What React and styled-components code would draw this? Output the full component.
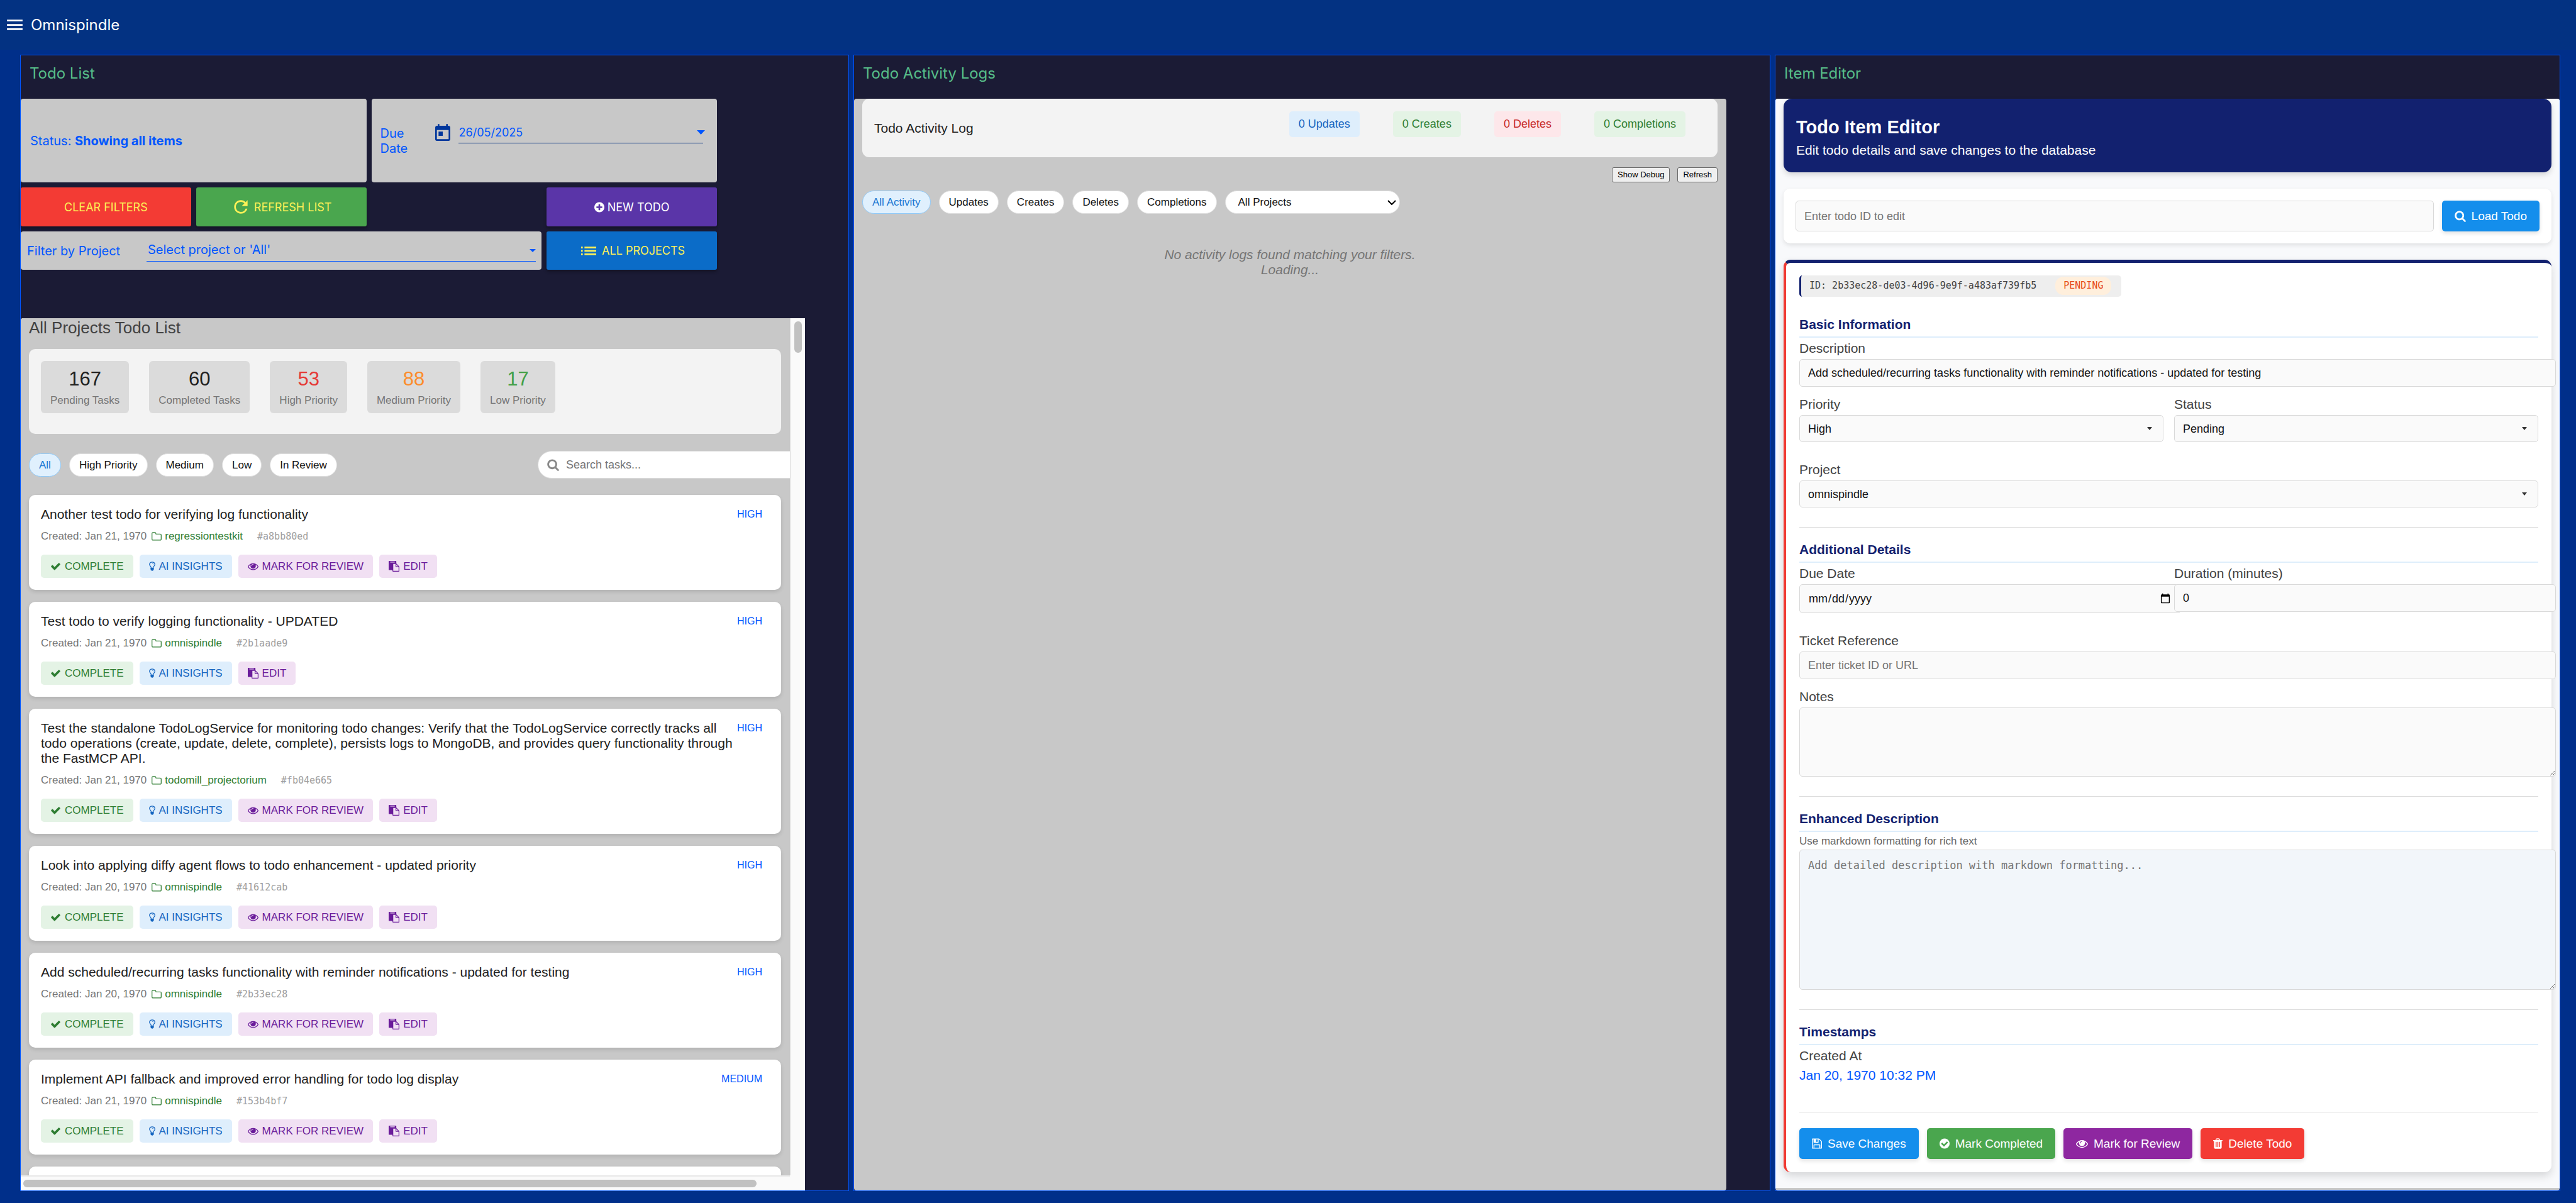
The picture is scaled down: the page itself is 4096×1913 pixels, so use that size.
import React from "react";
import styled, { createGlobalStyle, css } from "styled-components";
import { MdMenu, MdToday, MdRefresh, MdList } from "react-icons/md";

const sans = `"Liberation Sans", Arial, sans-serif`;
const system = `Inter, "Liberation Sans", sans-serif`;
const mono = `"DejaVu Sans Mono", "Liberation Mono", monospace`;

const blue = "#0055ff";
const navy = "#12216f";

const GlobalStyle = createGlobalStyle`
  *, *::before, *::after { box-sizing: border-box; }
  body { margin: 0; background: #002f8a; font-family: ${sans}; color: #212121; }
  button, input, select, textarea { font-family: inherit; margin: 0; }
  h1, h2, h3, p { margin: 0; font-weight: 400; }
  svg { display: block; flex: none; }
`;

/* ---------- icons ---------- */

const glyphs = {
  check: [0, 1792, "M1671 566q0 40-28 68l-724 724-136 136q-28 28-68 28t-68-28l-136-136-362-362q-28-28-28-68t28-68l136-136q28-28 68-28t68 28l294 295 656-657q28-28 68-28t68 28l136 136q28 28 28 68z"],
  search: [64, 1664, "M1216 832q0-185-131.5-316.5t-316.5-131.5-316.5 131.5-131.5 316.5 131.5 316.5 316.5 131.5 316.5-131.5 131.5-316.5zm512 832q0 52-38 90t-90 38q-54 0-90-38l-343-342q-179 124-399 124-143 0-273.5-55.5t-225-150-150-225-55.5-273.5 55.5-273.5 150-225 225-150 273.5-55.5 273.5 55.5 225 150 150 225 55.5 273.5q0 220-124 399l343 343q37 37 37 90z"],
  eye: [0, 1792, "M1664 960q-152-236-381-353 61 104 61 225 0 185-131.5 316.5t-316.5 131.5-316.5-131.5-131.5-316.5q0-121 61-225-229 117-381 353 133 205 333.5 326.5t434.5 121.5 434.5-121.5 333.5-326.5zm-720-384q0-20-14-34t-34-14q-125 0-214.5 89.5t-89.5 214.5q0 20 14 34t34 14 34-14 14-34q0-86 61-147t147-61q20 0 34-14t14-34zm848 384q0 34-20 69-140 230-376.5 368.5t-499.5 138.5-499.5-139-376.5-368q-20-35-20-69t20-69q140-229 376.5-368t499.5-139 499.5 139 376.5 368q20 35 20 69z"],
  folder: [64, 1664, "M1600 1312v-704q0-40-28-68t-68-28h-704q-40 0-68-28t-28-68v-64q0-40-28-68t-68-28h-320q-40 0-68 28t-28 68v960q0 40 28 68t68 28h1216q40 0 68-28t28-68zm128-704v704q0 92-66 158t-158 66h-1216q-92 0-158-66t-66-158v-960q0-92 66-158t158-66h320q92 0 158 66t66 158v32h672q92 0 158 66t66 158z"],
  checkCircle: [128, 1536, "M1412 734q0-28-18-46l-91-90q-19-19-45-19t-45 19l-408 407-226-226q-19-19-45-19t-45 19l-91 90q-18 18-18 46 0 27 18 45l362 362q19 19 45 19 27 0 46-19l543-543q18-18 18-45zm252 162q0 209-103 385.5t-279.5 279.5-385.5 103-385.5-103-279.5-279.5-103-385.5 103-385.5 279.5-279.5 385.5-103 385.5 103 279.5 279.5 103 385.5z"],
  plusCircle: [128, 1536, "M1344 960v-128q0-26-19-45t-45-19h-256v-256q0-26-19-45t-45-19h-128q-26 0-45 19t-19 45v256h-256q-26 0-45 19t-19 45v128q0 26 19 45t45 19h256v256q0 26 19 45t45 19h128q26 0 45-19t19-45v-256h256q26 0 45-19t19-45zm320-64q0 209-103 385.5t-279.5 279.5-385.5 103-385.5-103-279.5-279.5-103-385.5 103-385.5 279.5-279.5 385.5-103 385.5 103 279.5 279.5 103 385.5z"],
  trash: [192, 1408, "M704 1376v-704q0-14-9-23t-23-9h-64q-14 0-23 9t-9 23v704q0 14 9 23t23 9h64q14 0 23-9t9-23zm256 0v-704q0-14-9-23t-23-9h-64q-14 0-23 9t-9 23v704q0 14 9 23t23 9h64q14 0 23-9t9-23zm256 0v-704q0-14-9-23t-23-9h-64q-14 0-23 9t-9 23v704q0 14 9 23t23 9h64q14 0 23-9t9-23zm-544-992h448l-48-117q-7-9-17-11h-317q-10 2-17 11zm928 32v64q0 14-9 23t-23 9h-96v948q0 83-47 143.5t-113 60.5h-832q-66 0-113-58.5t-47-141.5v-952h-96q-14 0-23-9t-9-23v-64q0-14 9-23t23-9h309l70-167q15-37 54-63t79-26h320q40 0 79 26t54 63l70 167h309q14 0 23 9t9 23z"],
  save: [128, 1536, "M512 1536h768v-384h-768v384zm896 0h128v-896q0-14-10-38.5t-20-34.5l-281-281q-10-10-34-20t-39-10v416q0 40-28 68t-68 28h-576q-40 0-68-28t-28-68v-416h-128v1280h128v-416q0-40 28-68t68-28h832q40 0 68 28t28 68v416zm-384-928v-320q0-13-9.5-22.5t-22.5-9.5h-192q-13 0-22.5 9.5t-9.5 22.5v320q0 13 9.5 22.5t22.5 9.5h192q13 0 22.5-9.5t9.5-22.5zm640 32v928q0 40-28 68t-68 28h-1344q-40 0-68-28t-28-68v-1344q0-40 28-68t68-28h928q40 0 88 20t76 48l280 280q28 28 48 76t20 88z"],
  paste: [0, 1792, "M768 1664h896v-640h-416q-40 0-68-28t-28-68v-416h-384v1152zm256-1440v-64q0-13-9.5-22.5t-22.5-9.5h-704q-13 0-22.5 9.5t-9.5 22.5v64q0 13 9.5 22.5t22.5 9.5h704q13 0 22.5-9.5t9.5-22.5zm256 672h299l-299-299v299zm512 128v672q0 40-28 68t-68 28h-960q-40 0-68-28t-28-68v-160h-544q-40 0-68-28t-28-68v-1344q0-40 28-68t68-28h1088q40 0 68 28t28 68v328q21 13 36 28l408 408q28 28 48 76t20 88z"],
  bulb: [384, 1024, "M1120 576q0 13-9.5 22.5t-22.5 9.5-22.5-9.5-9.5-22.5q0-46-54-71t-106-25q-13 0-22.5-9.5t-9.5-22.5 9.5-22.5 22.5-9.5q50 0 99.5 16t87 54 37.5 90zm160 0q0-72-34.5-134t-90-101.5-123-62-136.5-22.5-136.5 22.5-123 62-90 101.5-34.5 134q0 101 68 180 10 11 30.5 33t30.5 33q128 153 141 298h228q13-145 141-298 10-11 30.5-33t30.5-33q68-79 68-180zm128 0q0 155-103 268-45 49-74.5 87t-59.5 95.5-34 107.5q47 28 47 82 0 37-25 64 25 27 25 64 0 52-45 81 13 23 13 47 0 46-31.5 71t-77.5 25q-20 44-60 70t-87 26-87-26-60-70q-46 0-77.5-25t-31.5-71q0-24 13-47-45-29-45-81 0-37 25-64-25-27-25-64 0-54 47-82-4-50-34-107.5t-59.5-95.5-74.5-87q-103-113-103-268 0-99 44.5-184.5t117-142 164-89 186.5-32.5 186.5 32.5 164 89 117 142 44.5 184.5z"],
};

function Icon({ name, size = 17 }) {
  const [x, w, d] = glyphs[name];
  return (
    <svg
      width={Math.round((size * w) / 1792)}
      height={size}
      viewBox={`${x} 0 ${w} 1792`}
      fill="currentColor"
      aria-hidden="true"
    >
      <path d={d} />
    </svg>
  );
}

function Caret({ width = 10, height = 5 }) {
  return (
    <svg width={width} height={height} viewBox="0 0 10 5" preserveAspectRatio="none" fill="currentColor" aria-hidden="true">
      <path d="M0 0h10L5 5z" />
    </svg>
  );
}

function Chevron() {
  return (
    <svg width="14" height="8" viewBox="0 0 14 8" fill="none" stroke="currentColor" strokeWidth="2" aria-hidden="true">
      <path d="M1 1l6 6 6-6" />
    </svg>
  );
}

/* ---------- shell ---------- */

const Page = styled.div`
  display: flex;
  flex-direction: column;
  height: 100vh;
`;

const TopBar = styled.header`
  display: flex;
  align-items: center;
  gap: 9px;
  padding: 23px 7px;
  background: #033282;
  color: #fff;
`;

const MenuButton = styled.button`
  padding: 0;
  border: 0;
  background: none;
  color: inherit;
`;

const Brand = styled.h1`
  font: 400 24px/33px ${system};
`;

const Columns = styled.main`
  flex: 1;
  min-height: 0;
  display: grid;
  grid-template-columns: 1318fr 1458fr 1249fr;
  gap: 7px;
  padding: 8px 25px 19px 32px;
`;

const Panel = styled.section`
  display: flex;
  flex-direction: column;
  min-width: 0;
  min-height: 0;
  border: 1px solid ${blue};
  background: #1b1b35;
`;

const PanelTitle = styled.h2`
  padding: 14px 14px 25px;
  font: 400 24px/30px ${system};
  color: #57be89;
`;

/* ---------- list panel: controls ---------- */

const Controls = styled.div`
  display: grid;
  grid-template-columns: repeat(4, 1fr);
  grid-template-rows: 133px 62px 61px;
  gap: 8px;
  margin: 0 209px 77px 0;
  font: 400 20px/24px ${system};
  color: ${blue};
`;

const ControlBox = styled.div`
  grid-column: span ${(p) => p.$span};
  display: flex;
  align-items: center;
  padding: 0 ${(p) => p.$padding};
  border-radius: 4px;
  background: #c8c8c8;
`;

const DateLabel = styled.label`
  width: 60px;
  margin-right: 23px;
`;

const DateControl = styled.div`
  flex: 1;
  display: flex;
  align-items: flex-end;
  gap: 9px;
  padding-bottom: 25px;
  color: #00369c;
`;

const Underlined = styled.div`
  flex: 1;
  display: grid;
  align-items: center;
  border-bottom: 1px solid ${(p) => p.$line};
  color: ${blue};
  > * { grid-area: 1 / 1; }
  > svg { justify-self: end; margin-right: ${(p) => p.$caret || "0"}; pointer-events: none; }
`;

const plainField = css`
  width: 100%;
  border: 0;
  outline: 0;
  appearance: none;
  background: none;
  color: inherit;
  border-radius: 0;
`;

const DateField = styled.input`
  ${plainField}
  padding: 4px 1px;
  font-size: 18px;
  line-height: 24px;
`;

const ProjectFilterLabel = styled.label`
  width: 190px;
`;

const ProjectFilter = styled.select`
  ${plainField}
  padding: 4px 2px 6px;
  font-size: 20px;
  line-height: 24px;
`;

const ActionButton = styled.button`
  grid-column: ${(p) => p.$column};
  display: flex;
  align-items: center;
  justify-content: center;
  gap: 5px;
  border: 0;
  border-radius: 3px;
  background: ${(p) => p.$bg};
  color: ${(p) => p.$color || "#fdf157"};
  box-shadow: 0 3px 5px rgba(0, 0, 0, 0.3);
  font-size: 18px;
  text-transform: uppercase;
`;

/* ---------- list panel: scroll area ---------- */

const ScrollFrame = styled.div`
  flex: 1;
  min-height: 0;
  display: grid;
  grid-template: minmax(0, 1fr) 24px / minmax(0, 1fr) 24px;
  margin-right: 69px;
  border-radius: 4px 0 0 0;
  overflow: hidden;
  background: #fafafa;
`;

const ScrollContent = styled.div`
  overflow: hidden;
  padding: 0 14px 0 13px;
  background: #c8c8c8;
`;

const VerticalTrack = styled.div`
  padding: 5px;
  border-left: 2px solid #e8e8e8;
`;

const HorizontalTrack = styled.div`
  padding: 5px 4px;
  border-top: 2px solid #e8e8e8;
`;

const Thumb = styled.div`
  width: ${(p) => p.$width};
  height: ${(p) => p.$height};
  border-radius: 7px;
  background: #c1c1c1;
`;

const ListTitle = styled.h3`
  margin-bottom: 19px;
  font-size: 26px;
  line-height: 30px;
  color: #424242;
`;

const Stats = styled.div`
  display: flex;
  gap: 32px;
  padding: 19px 19px 33px;
  border-radius: 10px;
  background: #f3f3f3;
`;

const Stat = styled.div`
  padding: 10px 15px 9px;
  border-radius: 6px;
  background: #dbdbdb;
  text-align: center;
`;

const StatNumber = styled.div`
  font-size: 31px;
  line-height: 38px;
  color: ${(p) => p.$color || "#212121"};
`;

const StatLabel = styled.div`
  margin-top: 4px;
  font-size: 17px;
  line-height: 22px;
  color: #757575;
`;

const FilterRow = styled.div`
  display: flex;
  align-items: center;
  gap: 13px;
  margin: ${(p) => p.$margin};
`;

const Pill = styled.button`
  padding: 0 15px;
  border: 1px solid ${(p) => (p.$active ? "#90caf9" : "#dddddd")};
  border-radius: 19px;
  background: ${(p) => (p.$active ? "#e0f0fd" : "#ffffff")};
  color: ${(p) => (p.$active ? "#1976d2" : "#111111")};
  font-size: 17px;
  line-height: 35px;
`;

const SearchBox = styled.label`
  display: flex;
  align-items: center;
  gap: 11px;
  flex: none;
  width: 440px;
  margin: 0 -53px 0 auto;
  padding: 0 14px;
  border: 1px solid #dddddd;
  border-radius: 22px;
  background: #fff;
  color: #888;
`;

const SearchInput = styled.input`
  ${plainField}
  padding: 0;
  font-size: 18px;
  line-height: 42px;
  height: 42px;
  &::placeholder { color: #757575; }
`;

const Todo = styled.article`
  margin-bottom: 19px;
  padding: 19px;
  border-radius: 10px;
  background: #fff;
  box-shadow: 0 3px 6px rgba(0, 0, 0, 0.12);
`;

const TodoHead = styled.div`
  display: flex;
  align-items: flex-start;
  justify-content: space-between;
`;

const TodoTitle = styled.h3`
  font-size: 21px;
  line-height: 24px;
`;

const Priority = styled.span`
  padding: 0 11px 0 5px;
  font-size: 16px;
  line-height: 24px;
  color: ${blue};
`;

const Meta = styled.div`
  display: flex;
  align-items: center;
  margin: 12px 0 18px;
  font-size: 17px;
  line-height: 22px;
  color: #757575;
`;

const Project = styled.span`
  display: flex;
  align-items: center;
  gap: 5px;
  margin: 0 23px 0 8px;
  color: #2e7d32;
`;

const Hash = styled.code`
  font: 15px/22px ${mono};
  color: #9e9e9e;
`;

const Actions = styled.div`
  display: flex;
  gap: 10px;
`;

const tones = {
  green: ["#e4f3e5", "#2e7d32"],
  blue: ["#deeefc", "#1565c0"],
  purple: ["#f1e0f3", "#6a1b9a"],
  red: ["#fde7ea", "#c62828"],
};

const SoftButton = styled.button`
  display: flex;
  align-items: center;
  gap: 6px;
  padding: 0 15px;
  border: 0;
  border-radius: 5px;
  background: ${(p) => tones[p.$tone][0]};
  color: ${(p) => tones[p.$tone][1]};
  font-size: 17px;
  line-height: 37px;
  text-transform: uppercase;
`;

/* ---------- log panel ---------- */

const LogBody = styled.div`
  flex: 1;
  margin-right: 69px;
  padding: 0 14px 0 13px;
  border-radius: 4px;
  background: #c8c8c8;
`;

const LogHeader = styled.div`
  display: flex;
  align-items: center;
  justify-content: space-between;
  padding: 20px 20px 20px 19px;
  border-radius: 11px;
  background: #f3f3f3;
`;

const LogTitle = styled.h3`
  font-size: 21px;
`;

const Badges = styled.div`
  display: flex;
  gap: 53px;
  margin: 0 31px 12px 0;
`;

const Badge = styled.span`
  padding: 0 15px;
  border-radius: 5px;
  background: ${(p) => tones[p.$tone][0]};
  color: ${(p) => tones[p.$tone][1]};
  font-size: 18px;
  line-height: 41px;
`;

const DebugRow = styled.div`
  display: flex;
  justify-content: flex-end;
  gap: 12px;
  margin-top: 16px;
`;

const DebugButton = styled.button`
  padding: 0 8px;
  border: 1px solid #6b6b6b;
  border-radius: 3px;
  background: #efefef;
  color: #000;
  font-size: 13px;
  line-height: 22px;
`;

const SelectWrap = styled.div`
  display: grid;
  align-items: center;
  color: ${(p) => p.$color || "#333"};
  > * { grid-area: 1 / 1; }
  > svg { justify-self: end; margin-right: ${(p) => p.$inset}; pointer-events: none; }
`;

const PillSelect = styled.select`
  appearance: none;
  width: 278px;
  padding: 0 20px;
  border: 1px solid #dddddd;
  border-radius: 19px;
  background: #fff;
  color: #111;
  font-size: 17px;
  line-height: 35px;
  height: 37px;
`;

const Empty = styled.p`
  margin-top: 53px;
  font-size: 21px;
  font-style: italic;
  line-height: 24px;
  text-align: center;
  color: #757575;
`;

/* ---------- editor panel ---------- */

const EditorFrame = styled.div`
  flex: 1;
  display: flex;
  flex-direction: column;
  padding-bottom: 4px;
  border-radius: 4px;
  background: #c8c8c8;
`;

const EditorBody = styled.div`
  flex: 1;
  display: flex;
  flex-direction: column;
  gap: 26px;
  padding: 0 13px;
  border-radius: 4px 4px 0 0;
  background: #f8f9fb;
`;

const EditorHeader = styled.header`
  padding: 28px 20px 23px;
  border-radius: 13px;
  background: ${navy};
  color: #fff;
  box-shadow: 0 4px 8px rgba(0, 0, 0, 0.14);
`;

const EditorTitle = styled.h3`
  margin-bottom: 7px;
  font-size: 29px;
  font-weight: 700;
  line-height: 34px;
`;

const EditorSubtitle = styled.p`
  font-size: 21px;
  line-height: 25px;
`;

const LookupCard = styled.form`
  display: flex;
  gap: 13px;
  padding: 19px;
  border-radius: 10px;
  background: #fff;
  box-shadow: 0 3px 7px rgba(0, 0, 0, 0.1);
`;

const fieldLook = css`
  border: 1px solid #d9d9d9;
  border-radius: 5px;
  background: #fafafa;
  color: #111;
  font-size: 18px;
  line-height: 22px;
  &::placeholder { color: #757575; }
`;

const LookupInput = styled.input`
  ${fieldLook}
  flex: 1;
  padding: 12px 13px;
`;

const SolidButton = styled.button`
  display: flex;
  align-items: center;
  gap: 9px;
  padding: 0 20px;
  border: 0;
  border-radius: 5px;
  background: ${(p) => p.$bg};
  color: #fff;
  font-size: 19px;
  line-height: 49px;
  box-shadow: 0 3px 6px rgba(0, 0, 0, 0.12);
`;

const FormCard = styled.form`
  padding: 20px 21px 21px;
  border-left: 4px solid #f03b34;
  border-top: 5px solid ${navy};
  border-radius: 11px;
  background: #fff;
  box-shadow: 0 6px 14px rgba(0, 0, 0, 0.14);
`;

const IdTag = styled.div`
  display: flex;
  align-items: center;
  gap: 30px;
  width: fit-content;
  padding: 2px 16px 3px 13px;
  border-left: 3px solid ${navy};
  border-radius: 5px;
  background: #eeeeee;
  font: 15px/29px ${mono};
  color: #424242;
`;

const StatusTag = styled.span`
  padding: 0 13px;
  border-radius: 13px;
  background: #ffefdc;
  color: #e64a19;
`;

const Section = styled.fieldset`
  margin: 0;
  min-width: 0;
  padding: ${(p) => (p.$first ? "30px" : "21px")} 0 ${(p) => p.$end || "31px"};
  border: 0;
  border-bottom: 1px solid #dcdcdc;
`;

const SectionTitle = styled.h3`
  padding-bottom: 6px;
  border-bottom: 2px solid #deeefb;
  font-size: 21px;
  font-weight: 700;
  line-height: 27px;
  color: ${navy};
`;

const Field = styled.div`
  padding-top: 5px;
  margin-bottom: ${(p) => p.$after || "0"};
`;

const FieldRow = styled.div`
  display: grid;
  grid-template-columns: 1fr 1fr;
  align-items: start;
  gap: 17px;
  margin-bottom: ${(p) => p.$after || "0"};
`;

const Label = styled.label`
  display: block;
  margin-bottom: 5px;
  font-size: 21px;
  line-height: 24px;
  color: #424242;
`;

const Hint = styled(Label)`
  margin-bottom: 3px;
  font-size: 17px;
  line-height: 20px;
  color: #666;
`;

/* Text fields keep the content-box sizing, so their padding runs past the column. */
const TextField = styled.input`
  ${fieldLook}
  display: block;
  box-sizing: content-box;
  width: 100%;
  height: ${(p) => p.$height || "22px"};
  padding: 10px 13px;
`;

const TextArea = styled.textarea`
  ${fieldLook}
  display: block;
  box-sizing: content-box;
  width: 100%;
  height: ${(p) => p.$height};
  padding: 13px;
  ${(p) => p.$mono && css`
    background: #f2f6fa;
    font: 17px/22px ${mono};
  `}
`;

const SelectField = styled.select`
  ${fieldLook}
  appearance: none;
  width: 100%;
  height: 43px;
  padding: 0 13px;
`;

const Timestamp = styled.p`
  margin-top: 7px;
  font-size: 21px;
  line-height: 24px;
  color: ${blue};
`;

const ButtonRow = styled.div`
  display: flex;
  gap: 13px;
  margin-top: 25px;
`;

/* ---------- data ---------- */

const stats = [
  ["167", "Pending Tasks"],
  ["60", "Completed Tasks"],
  ["53", "High Priority", "#e53935"],
  ["88", "Medium Priority", "#fb8c2b"],
  ["17", "Low Priority", "#43a047"],
];

const todos = [
  { title: "Another test todo for verifying log functionality", date: "Jan 21, 1970", project: "regressiontestkit", hash: "#a8bb80ed", priority: "HIGH", review: true },
  { title: "Test todo to verify logging functionality - UPDATED", date: "Jan 21, 1970", project: "omnispindle", hash: "#2b1aade9", priority: "HIGH", review: false },
  { title: "Test the standalone TodoLogService for monitoring todo changes: Verify that the TodoLogService correctly tracks all todo operations (create, update, delete, complete), persists logs to MongoDB, and provides query functionality through the FastMCP API.", date: "Jan 21, 1970", project: "todomill_projectorium", hash: "#fb04e665", priority: "HIGH", review: true },
  { title: "Look into applying diffy agent flows to todo enhancement - updated priority", date: "Jan 20, 1970", project: "omnispindle", hash: "#41612cab", priority: "HIGH", review: true },
  { title: "Add scheduled/recurring tasks functionality with reminder notifications - updated for testing", date: "Jan 20, 1970", project: "omnispindle", hash: "#2b33ec28", priority: "HIGH", review: true },
  { title: "Implement API fallback and improved error handling for todo log display", date: "Jan 21, 1970", project: "omnispindle", hash: "#153b4bf7", priority: "MEDIUM", review: true },
];

function TodoCard({ todo }) {
  return (
    <Todo>
      <TodoHead>
        <TodoTitle>{todo.title}</TodoTitle>
        <Priority>{todo.priority}</Priority>
      </TodoHead>
      <Meta>
        <span>Created: {todo.date}</span>
        <Project>
          <Icon name="folder" />
          {todo.project}
        </Project>
        <Hash>{todo.hash}</Hash>
      </Meta>
      <Actions>
        <SoftButton $tone="green"><Icon name="check" />Complete</SoftButton>
        <SoftButton $tone="blue"><Icon name="bulb" />AI Insights</SoftButton>
        {todo.review && <SoftButton $tone="purple"><Icon name="eye" />Mark for Review</SoftButton>}
        <SoftButton $tone="purple"><Icon name="paste" />Edit</SoftButton>
      </Actions>
    </Todo>
  );
}

function ListPanel() {
  return (
    <Panel>
      <PanelTitle>Todo List</PanelTitle>
      <Controls>
        <ControlBox $span={2} $padding="15px">
          <span>Status: <strong>Showing all items</strong></span>
        </ControlBox>
        <ControlBox $span={2} $padding="22px 0 14px">
          <DateLabel htmlFor="due-filter">Due Date</DateLabel>
          <DateControl>
            <MdToday size={32} />
            <Underlined $line="#003080" $caret="-3px">
              <DateField id="due-filter" type="text" defaultValue="26/05/2025" />
              <Caret width={13} height={7} />
            </Underlined>
          </DateControl>
        </ControlBox>
        <ActionButton $column="1" $bg="#f33b34">Clear Filters</ActionButton>
        <ActionButton $column="2" $bg="#4aa64e"><MdRefresh size={32} />Refresh List</ActionButton>
        <ActionButton $column="4" $bg="#5a35a8" $color="#fff"><Icon name="plusCircle" size={19} />New Todo</ActionButton>
        <ControlBox $span={3} $padding="9px 0 10px">
          <ProjectFilterLabel htmlFor="project-filter">Filter by Project</ProjectFilterLabel>
          <Underlined $line={blue}>
            <ProjectFilter id="project-filter">
              <option>Select project or 'All'</option>
            </ProjectFilter>
            <Caret />
          </Underlined>
        </ControlBox>
        <ActionButton $column="4" $bg="#0b6cc8"><MdList size={32} />All Projects</ActionButton>
      </Controls>
      <ScrollFrame>
        <ScrollContent>
          <ListTitle>All Projects Todo List</ListTitle>
          <Stats>
            {stats.map(([value, label, color]) => (
              <Stat key={label}>
                <StatNumber $color={color}>{value}</StatNumber>
                <StatLabel>{label}</StatLabel>
              </Stat>
            ))}
          </Stats>
          <FilterRow $margin="27px 0 26px">
            <Pill $active>All</Pill>
            <Pill>High Priority</Pill>
            <Pill>Medium</Pill>
            <Pill>Low</Pill>
            <Pill>In Review</Pill>
            <SearchBox>
              <Icon name="search" size={20} />
              <SearchInput type="text" placeholder="Search tasks..." aria-label="Search tasks" />
            </SearchBox>
          </FilterRow>
          {todos.map((todo) => <TodoCard key={todo.hash} todo={todo} />)}
          <Todo />
        </ScrollContent>
        <VerticalTrack><Thumb $width="12px" $height="50px" /></VerticalTrack>
        <HorizontalTrack><Thumb $width="96%" $height="12px" /></HorizontalTrack>
      </ScrollFrame>
    </Panel>
  );
}

function LogPanel() {
  return (
    <Panel>
      <PanelTitle>Todo Activity Logs</PanelTitle>
      <LogBody>
        <LogHeader>
          <LogTitle>Todo Activity Log</LogTitle>
          <Badges>
            <Badge $tone="blue">0 Updates</Badge>
            <Badge $tone="green">0 Creates</Badge>
            <Badge $tone="red">0 Deletes</Badge>
            <Badge $tone="green">0 Completions</Badge>
          </Badges>
        </LogHeader>
        <DebugRow>
          <DebugButton>Show Debug</DebugButton>
          <DebugButton>Refresh</DebugButton>
        </DebugRow>
        <FilterRow $margin="13px 0 0">
          <Pill $active>All Activity</Pill>
          <Pill>Updates</Pill>
          <Pill>Creates</Pill>
          <Pill>Deletes</Pill>
          <Pill>Completions</Pill>
          <SelectWrap $inset="6px" $color="#000">
            <PillSelect aria-label="Project">
              <option>All Projects</option>
            </PillSelect>
            <Chevron />
          </SelectWrap>
        </FilterRow>
        <Empty>No activity logs found matching your filters.<br />Loading...</Empty>
      </LogBody>
    </Panel>
  );
}

function SelectControl({ id, value }) {
  return (
    <SelectWrap $inset="18px">
      <SelectField id={id}>
        <option>{value}</option>
      </SelectField>
      <Caret width={8} />
    </SelectWrap>
  );
}

function EditorPanel() {
  return (
    <Panel>
      <PanelTitle>Item Editor</PanelTitle>
      <EditorFrame>
        <EditorBody>
          <EditorHeader>
            <EditorTitle>Todo Item Editor</EditorTitle>
            <EditorSubtitle>Edit todo details and save changes to the database</EditorSubtitle>
          </EditorHeader>
          <LookupCard>
            <LookupInput type="text" placeholder="Enter todo ID to edit" aria-label="Todo ID" />
            <SolidButton type="button" $bg="#148eec"><Icon name="search" size={19} />Load Todo</SolidButton>
          </LookupCard>
          <FormCard>
            <IdTag>
              <span>ID: 2b33ec28-de03-4d96-9e9f-a483af739fb5</span>
              <StatusTag>PENDING</StatusTag>
            </IdTag>
            <Section $first>
              <SectionTitle>Basic Information</SectionTitle>
              <Field $after="11px">
                <Label htmlFor="description">Description</Label>
                <TextField id="description" type="text" defaultValue="Add scheduled/recurring tasks functionality with reminder notifications - updated for testing" />
              </Field>
              <FieldRow $after="27px">
                <Field>
                  <Label htmlFor="priority">Priority</Label>
                  <SelectControl id="priority" value="High" />
                </Field>
                <Field>
                  <Label htmlFor="status">Status</Label>
                  <SelectControl id="status" value="Pending" />
                </Field>
              </FieldRow>
              <Field>
                <Label htmlFor="project">Project</Label>
                <SelectControl id="project" value="omnispindle" />
              </Field>
            </Section>
            <Section>
              <SectionTitle>Additional Details</SectionTitle>
              <FieldRow $after="27px">
                <Field>
                  <Label htmlFor="due">Due Date</Label>
                  <TextField id="due" type="date" $height="24px" />
                </Field>
                <Field>
                  <Label htmlFor="duration">Duration (minutes)</Label>
                  <TextField id="duration" type="number" defaultValue="0" />
                </Field>
              </FieldRow>
              <Field $after="11px">
                <Label htmlFor="ticket">Ticket Reference</Label>
                <TextField id="ticket" type="text" placeholder="Enter ticket ID or URL" />
              </Field>
              <Field>
                <Label htmlFor="notes">Notes</Label>
                <TextArea id="notes" $height="82px" />
              </Field>
            </Section>
            <Section>
              <SectionTitle>Enhanced Description</SectionTitle>
              <Field>
                <Hint htmlFor="enhanced">Use markdown formatting for rich text</Hint>
                <TextArea id="enhanced" $mono $height="195px" placeholder="Add detailed description with markdown formatting..." />
              </Field>
            </Section>
            <Section $end="46px">
              <SectionTitle>Timestamps</SectionTitle>
              <Field>
                <Label as="div">Created At</Label>
                <Timestamp>Jan 20, 1970 10:32 PM</Timestamp>
              </Field>
            </Section>
            <ButtonRow>
              <SolidButton type="button" $bg="#148eec"><Icon name="save" size={19} />Save Changes</SolidButton>
              <SolidButton type="button" $bg="#4aa64e"><Icon name="checkCircle" size={19} />Mark Completed</SolidButton>
              <SolidButton type="button" $bg="#8e27a0"><Icon name="eye" size={19} />Mark for Review</SolidButton>
              <SolidButton type="button" $bg="#f33b34"><Icon name="trash" size={19} />Delete Todo</SolidButton>
            </ButtonRow>
          </FormCard>
        </EditorBody>
      </EditorFrame>
    </Panel>
  );
}

export default function App() {
  return (
    <Page>
      <GlobalStyle />
      <TopBar>
        <MenuButton aria-label="Menu"><MdMenu size={33} /></MenuButton>
        <Brand>Omnispindle</Brand>
      </TopBar>
      <Columns>
        <ListPanel />
        <LogPanel />
        <EditorPanel />
      </Columns>
    </Page>
  );
}
